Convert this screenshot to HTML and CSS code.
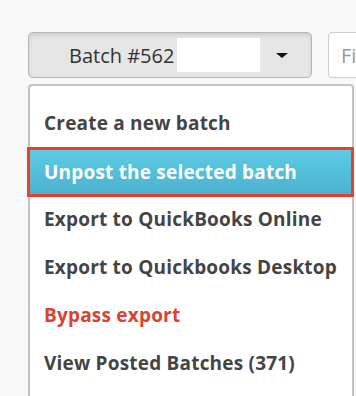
FILE: index.html
```html
<!DOCTYPE html>
<html lang="en">
<head>
    <meta charset="UTF-8">
    <title>Batches</title>
    <meta name="viewport" content="width=device-width, initial-scale=1">
    <link rel="stylesheet" href="styles.css">
</head>
<body>
    <div class="toolbar">
        <div class="batch-select">
            <button class="batch-btn" type="button">
                <span class="batch-label">Batch #562</span>
                <span class="batch-hidden"></span>
                <span class="caret"></span>
            </button>

            <ul class="batch-menu">
                <li><a href="#">Create a new batch</a></li>
                <li class="active"><a href="#">Unpost the selected batch</a></li>
                <li><a href="#">Export to QuickBooks Online</a></li>
                <li><a href="#">Export to Quickbooks Desktop</a></li>
                <li class="danger"><a href="#">Bypass export</a></li>
                <li><a href="#">View Posted Batches (371)</a></li>
                <li><a href="#">&nbsp;</a></li>
            </ul>
        </div>

        <input class="filter" type="text" placeholder="Filter">
    </div>
</body>
</html>
```

FILE: styles.css
```css
html, body {
    height: 100%;
}
body {
    font-family: 'Open Sans', Lato, sans-serif;
    margin: 0;
    padding: 0;
    background: #f8f8f8;
    color: #444;
    overflow: hidden;
}
.toolbar {
    display: flex;
    align-items: flex-start;
    gap: 16px;
    padding: 32px 0 0 28px;
}
.batch-select {
    flex: 0 0 284px;
    min-width: 0;
}
.batch-btn {
    display: flex;
    align-items: center;
    width: 284px;
    height: 46px;
    padding: 0 23px 0 40px;
    box-sizing: border-box;
    background: #e6e6e6;
    border: 1px solid #b5b5b5;
    border-radius: 5px;
    box-shadow: inset 0 2px 4px rgba(0,0,0,0.12);
    font-family: inherit;
    font-size: 20px;
    color: #333;
}
.batch-hidden {
    width: 83px;
    height: 34px;
    margin-left: 3px;
    background: #fff;
}
.caret {
    margin-left: auto;
    width: 0;
    height: 0;
    border-left: 6px solid transparent;
    border-right: 6px solid transparent;
    border-top: 5px solid #111;
}
.batch-menu {
    list-style: none;
    margin: 6px 0 0 0;
    padding: 13px 0 0 0;
    width: 326px;
    box-sizing: border-box;
    background: #fff;
    border: 2px solid #c4c4c4;
    border-radius: 4px;
}
.batch-menu li a {
    display: block;
    height: 48px;
    line-height: 48px;
    padding-left: 14px;
    font-size: 19px;
    font-weight: bold;
    letter-spacing: 0.2px;
    color: #444;
    text-decoration: none;
    white-space: nowrap;
}
.batch-menu li.active a {
    height: 50px;
    line-height: 44px;
    margin: 0 -2px -2px -3px;
    padding-left: 14px;
    box-sizing: border-box;
    border: 3px solid #e6412b;
    background: linear-gradient(#5dcbe5, #4cb2cf);
    color: #fff;
}
.batch-menu li.danger a {
    color: #d9432f;
}
.filter {
    flex: 0 0 80px;
    height: 46px;
    box-sizing: border-box;
    padding: 0 12px;
    border: 1px solid #ccc;
    border-radius: 4px;
    background: #fff;
    font-family: inherit;
    font-size: 20px;
}
.filter::placeholder {
    color: #999;
}
```
